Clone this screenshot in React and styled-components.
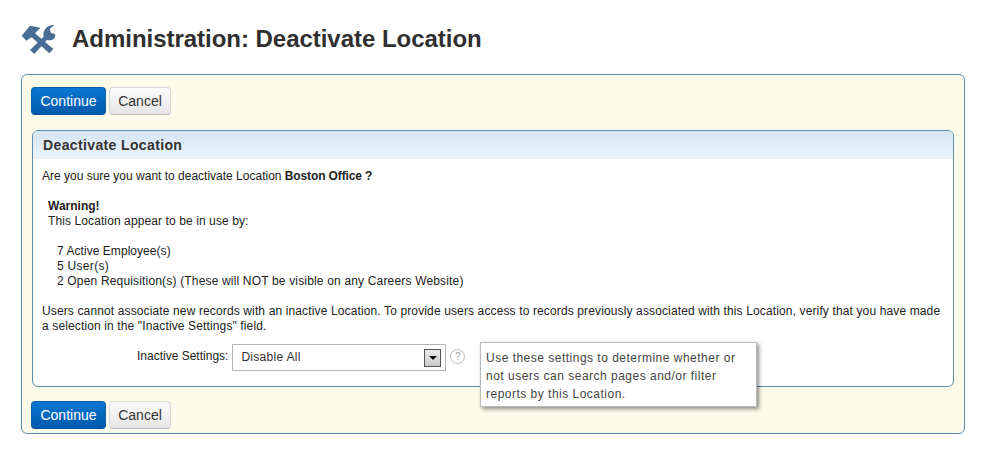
import React from 'react';
import styled, {createGlobalStyle} from 'styled-components';

const GlobalStyle = createGlobalStyle`
  html, body { margin: 0; padding: 0; background: #fff; }
  body { font-family: "Liberation Sans", Arial, sans-serif; font-size: 12px; color: #222; }
`;

const Page = styled.div`
  width: 983px;
  height: 451px;
  padding: 21px 18px 0 21px;
  box-sizing: border-box;
  overflow: hidden;
`;

const TitleRow = styled.div`
  display: flex;
  align-items: center;
  height: 36px;
  gap: 15px;
  margin-bottom: 17px;
`;

const Title = styled.h1`
  margin: 0;
  font-size: 24px;
  line-height: 36px;
  font-weight: bold;
  letter-spacing: -0.03px;
  color: #2f2f2f;
`;

const Outer = styled.div`
  width: 944px;
  height: 360px;
  box-sizing: border-box;
  border: 1px solid #5e8fb3;
  border-radius: 6px;
  background: #fcfbe9;
  padding: 12px 10px 0;
`;

const Actions = styled.div`
  display: flex;
  gap: 3px;
  margin-left: -1px;
`;

const Button = styled.button`
  height: 28px;
  box-sizing: border-box;
  padding: 0;
  width: ${p => p.$width}px;
  border-radius: 4px;
  font-family: inherit;
  font-size: 14px;
  border: 1px solid ${p => (p.$primary ? '#0a5ea8' : '#d6d6d6')};
  border-bottom-color: ${p => (p.$primary ? '#00509b' : '#bbb')};
  color: ${p => (p.$primary ? '#fff' : '#333')};
  background: ${p => (p.$primary
    ? 'linear-gradient(#0a78d2, #0059ab)'
    : 'linear-gradient(#fbfbfb, #e6e6e6)')};
`;

const Inner = styled.div`
  width: 922px;
  height: 257px;
  box-sizing: border-box;
  margin: 15px 0 14px;
  border: 1px solid #5e8fb3;
  border-radius: 6px;
  background: #fff;
`;

const InnerHead = styled.div`
  height: 28px;
  line-height: 28px;
  padding-left: 10px;
  font-size: 14px;
  font-weight: bold;
  letter-spacing: 0.37px;
  color: #333;
  border-radius: 5px 5px 0 0;
  background: linear-gradient(#d5e5f2, #ebf4fb);
`;

const Body = styled.div`
  position: relative;
  padding: 10px 9px 0;
  line-height: 15px;
  color: #222;
`;

const Para = styled.p`
  margin: 0 0 ${p => p.$gap ?? 15}px ${p => p.$indent ?? 0}px;
  letter-spacing: ${p => p.$spacing ?? 0}px;
`;

const Strong = styled.b`
  letter-spacing: -0.13px;
`;

const FormRow = styled.div`
  display: flex;
  align-items: center;
  height: 27px;
  margin-top: 10px;
  padding-left: 95px;
`;

const FieldLabel = styled.label`
  margin-right: 3px;
  position: relative;
  top: -1px;
`;

const Select = styled.div`
  width: 214px;
  height: 27px;
  margin-left: 1px;
  box-sizing: border-box;
  border: 1px solid #b4b4b4;
  display: flex;
  align-items: center;
  justify-content: space-between;
  padding: 0 4px 0 8px;
  letter-spacing: 0.3px;
  color: #333;
`;

const SelectArrow = styled.span`
  width: 17px;
  height: 18px;
  box-sizing: border-box;
  border: 1px solid #555;
  background: linear-gradient(#ececec, #ccc);
  display: flex;
  align-items: center;
  justify-content: center;
  &::after {
    content: '';
    border-style: solid;
    border-width: 4px 4px 0;
    border-color: #111 transparent transparent;
  }
`;

const Help = styled.span`
  width: 13px;
  height: 13px;
  margin-left: 4px;
  border: 1px solid #bcbcbc;
  border-radius: 50%;
  color: #a0a0a0;
  font-size: 10px;
  line-height: 13px;
  text-align: center;
  position: relative;
  top: -1px;
`;

const Tooltip = styled.div`
  position: absolute;
  left: 447px;
  top: 183px;
  width: 277px;
  height: 65px;
  box-sizing: border-box;
  padding: 6px 5px;
  border: 1px solid #bbb;
  background: #fff;
  box-shadow: 2px 2px 4px rgba(0, 0, 0, 0.45);
  color: #444;
  line-height: 18px;
  letter-spacing: 0.49px;
  z-index: 2;
`;

const ToolsIcon = () => (
  <svg width="36" height="30" viewBox="0 0 108 90" aria-hidden="true">
    <g fill="#4a6d96">
      <path d="M2 35 L27 5 L58 11 L42 28 L97 75 L85 88 L32 40 L16 50 Z" />
      <path d="M27 78 L68 38 C64 22 76 2 100 3 L86 15 L90 27 L102 30 C106 44 92 52 78 48 L40 90 Z" />
    </g>
  </svg>
);

function App() {
  return (
    <Page>
      <GlobalStyle />
      <TitleRow>
        <ToolsIcon />
        <Title>Administration: Deactivate Location</Title>
      </TitleRow>
      <Outer>
        <Actions>
          <Button $primary $width={75}>Continue</Button>
          <Button $width={62}>Cancel</Button>
        </Actions>
        <Inner>
          <InnerHead>Deactivate Location</InnerHead>
          <Body>
            <Para>Are you sure you want to deactivate Location <Strong>Boston Office ?</Strong></Para>
            <Para $gap={0} $indent={6}><b>Warning!</b></Para>
            <Para $indent={6} $spacing={0.1}>This Location appear to be in use by:</Para>
            <Para $gap={0} $indent={15} $spacing={0.05}>7 Active Employee(s)</Para>
            <Para $gap={0} $indent={15} $spacing={0.3}>5 User(s)</Para>
            <Para $indent={15} $spacing={0.17}>2 Open Requisition(s) (These will NOT be visible on any Careers Website)</Para>
            <Para $gap={0} $spacing={0.13}>Users cannot associate new records with an inactive Location. To provide users access to records previously associated with this Location, verify that you have made a selection in the "Inactive Settings" field.</Para>
            <FormRow>
              <FieldLabel>Inactive Settings:</FieldLabel>
              <Select>
                Disable All
                <SelectArrow />
              </Select>
              <Help>?</Help>
            </FormRow>
            <Tooltip>Use these settings to determine whether or not users can search pages and/or filter reports by this Location.</Tooltip>
          </Body>
        </Inner>
        <Actions>
          <Button $primary $width={75}>Continue</Button>
          <Button $width={62}>Cancel</Button>
        </Actions>
      </Outer>
    </Page>
  );
}

export default App;
